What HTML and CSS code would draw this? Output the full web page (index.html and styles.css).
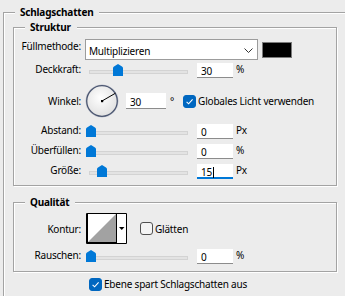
FILE: index.html
```html
<!DOCTYPE html>
<html lang="de">
<head>
    <meta charset="UTF-8">
    <meta name="viewport" content="width=device-width, initial-scale=1.0">
    <title>Schlagschatten</title>
    <link rel="stylesheet" href="styles.css">
</head>
<body>
    <fieldset class="group outer">
        <legend>Schlagschatten</legend>

        <fieldset class="group inner structure">
            <legend>Struktur</legend>

            <div class="row blend-row">
                <span class="label">Füllmethode:</span>
                <div class="select">
                    <span>Multiplizieren</span>
                    <svg class="chevron" width="9" height="5" viewBox="0 0 9 5"><path d="M0.5 0.5 4.5 4.5 8.5 0.5" fill="none" stroke="#333" stroke-width="1"/></svg>
                </div>
                <div class="swatch"></div>
            </div>

            <div class="row slider-row opacity-row">
                <span class="label">Deckkraft:</span>
                <div class="slider">
                    <div class="track"></div>
                    <svg class="thumb" style="left:28px" width="10" height="12" viewBox="0 0 10 12"><path d="M0 4Q0 3 1 2.4L5 0 9 2.4Q10 3 10 4V12H0Z" fill="#0078d7"/></svg>
                </div>
                <div class="field">30</div>
                <span class="unit">%</span>
            </div>

            <div class="row angle-row">
                <span class="label">Winkel:</span>
                <svg class="dial" width="34" height="34" viewBox="0 0 34 34">
                    <defs>
                        <radialGradient id="dialFill" cx="45%" cy="40%" r="60%">
                            <stop offset="0" stop-color="#ffffff"/>
                            <stop offset="1" stop-color="#e1e1e1"/>
                        </radialGradient>
                    </defs>
                    <circle cx="17" cy="17" r="16.2" fill="none" stroke="#c8cbd4" stroke-width="1"/>
                    <circle cx="17" cy="17" r="15.3" fill="url(#dialFill)" stroke="#4a5570" stroke-width="1.3"/>
                    <line x1="17" y1="17" x2="30.5" y2="9.2" stroke="#000" stroke-width="1"/>
                    <rect x="16" y="16" width="2.2" height="2.2" fill="#000"/>
                </svg>
                <div class="field wide">30</div>
                <span class="degree">°</span>
                <label class="check">
                    <span class="check-box on">
                        <svg width="11" height="11" viewBox="0 0 11 11"><path d="M2.6 5.8 4.6 7.8 8.6 3.4" fill="none" stroke="#fff" stroke-width="1.1"/></svg>
                    </span>
                    Globales Licht verwenden
                </label>
            </div>

            <div class="row slider-row distance-row">
                <span class="label">Abstand:</span>
                <div class="slider">
                    <div class="track"></div>
                    <svg class="thumb" style="left:1px" width="10" height="12" viewBox="0 0 10 12"><path d="M0 4Q0 3 1 2.4L5 0 9 2.4Q10 3 10 4V12H0Z" fill="#0078d7"/></svg>
                </div>
                <div class="field">0</div>
                <span class="unit">Px</span>
            </div>

            <div class="row slider-row">
                <span class="label">Überfüllen:</span>
                <div class="slider">
                    <div class="track"></div>
                    <svg class="thumb" style="left:1px" width="10" height="12" viewBox="0 0 10 12"><path d="M0 4Q0 3 1 2.4L5 0 9 2.4Q10 3 10 4V12H0Z" fill="#0078d7"/></svg>
                </div>
                <div class="field">0</div>
                <span class="unit">%</span>
            </div>

            <div class="row slider-row">
                <span class="label">Größe:</span>
                <div class="slider">
                    <div class="track"></div>
                    <svg class="thumb" style="left:12px" width="10" height="12" viewBox="0 0 10 12"><path d="M0 4Q0 3 1 2.4L5 0 9 2.4Q10 3 10 4V12H0Z" fill="#0078d7"/></svg>
                </div>
                <div class="field active">15<span class="caret"></span></div>
                <span class="unit">Px</span>
            </div>
        </fieldset>

        <fieldset class="group inner quality">
            <legend>Qualität</legend>

            <div class="row contour-row">
                <span class="label">Kontur:</span>
                <svg class="contour" width="41" height="31" viewBox="0 0 41 31">
                    <rect x="0" y="0" width="41" height="31" fill="#fff"/>
                    <path d="M2 29 30 1V29Z" fill="#a2a2a2"/>
                    <path d="M0.5 0.5H40.5V30.5H0.5Z" fill="none" stroke="#000"/>
                    <path d="M1.5 1V30M1 29.5H30M30.5 1V30" fill="none" stroke="#000"/>
                    <path d="M33 14H38.5L35.75 17Z" fill="#000"/>
                </svg>
                <label class="check">
                    <span class="check-box"></span>
                    Glätten
                </label>
            </div>

            <div class="row slider-row">
                <span class="label">Rauschen:</span>
                <div class="slider">
                    <div class="track"></div>
                    <svg class="thumb" style="left:1px" width="10" height="12" viewBox="0 0 10 12"><path d="M0 4Q0 3 1 2.4L5 0 9 2.4Q10 3 10 4V12H0Z" fill="#0078d7"/></svg>
                </div>
                <div class="field">0</div>
                <span class="unit">%</span>
            </div>
        </fieldset>

        <div class="row layer-row">
            <label class="check">
                <span class="check-box on">
                    <svg width="11" height="11" viewBox="0 0 11 11"><path d="M2.6 5.8 4.6 7.8 8.6 3.4" fill="none" stroke="#fff" stroke-width="1.1"/></svg>
                </span>
                Ebene spart Schlagschatten aus
            </label>
        </div>
    </fieldset>
</body>
</html>
```

FILE: styles.css
```css
body {
    margin: 0;
    background: #ececec;
    font-family: "Noto Sans", sans-serif;
    font-size: 10px;
    line-height: 14px;
    letter-spacing: -0.2px;
    color: #000;
    overflow: hidden;
}
.group {
    margin: 0;
    padding: 0;
    min-width: 0;
    box-sizing: border-box;
    border: 1px solid #a3a3a3;
    box-shadow: inset 1px 1px 0 #fff, 1px 1px 0 #fff;
}
.group > legend {
    margin-left: 11px;
    padding: 0 6px 0 5px;
    font-weight: bold;
    line-height: 14px;
    background: #ececec;
}
/* the dialog continues past the right and bottom edge */
.outer {
    margin: 5px 0 0 3px;
    width: 342px;
    padding-bottom: 5px;
    border-right: 0;
    border-bottom: 0;
    box-shadow: inset 1px 1px 0 #fff;
}
.inner {
    margin-left: 9px;
    width: 324px;
}
.structure {
    margin-top: 1px;
    padding-bottom: 6px;
}
.quality {
    margin-top: 9px;
    padding-bottom: 7px;
}
.row {
    display: flex;
    align-items: center;
}
.label {
    flex: none;
    width: 67px;
    margin-right: 4px;
    text-align: right;
}
.blend-row {
    height: 21px;
    margin-top: 5px;
    align-items: flex-start;
}
.select {
    flex: none;
    display: flex;
    justify-content: space-between;
    align-items: flex-start;
    width: 173px;
    height: 21px;
    box-sizing: border-box;
    padding: 4px 4px 0 3px;
    margin-right: 4px;
    background: #fff;
    border: 1px solid #9c9c9c;
}
.chevron {
    margin-top: 4px;
}
.swatch {
    align-self: center;
    width: 30px;
    height: 16px;
    box-sizing: border-box;
    background: #000;
    border: 1px solid #7b7b7b;
}
.slider-row {
    height: 15px;
    margin-top: 5px;
    align-items: flex-start;
}
.slider-row .label,
.unit {
    margin-top: -1px;
}
.opacity-row {
    margin-top: 3px;
}
.distance-row {
    margin-top: 6px;
}
.slider {
    position: relative;
    flex: none;
    width: 108px;
    height: 15px;
    margin-right: 4px;
}
.track {
    height: 4px;
    margin: 7px 5px 0 4px;
    box-sizing: border-box;
    background: #e3e3e3;
    border: 1px solid #d3d3d3;
}
.thumb {
    position: absolute;
    top: 1px;
}
.field {
    flex: none;
    width: 36px;
    height: 15px;
    box-sizing: border-box;
    padding: 1px 0 0 4px;
    background: #fff;
    border-bottom: 1px solid #8c8c8c;
}
.field.active {
    border-bottom: 2px solid #0078d7;
}
.caret {
    display: inline-block;
    width: 1px;
    height: 11px;
    margin-left: 1px;
    vertical-align: -2px;
    background: #000;
}
.unit {
    margin-left: 3px;
}
.angle-row {
    height: 34px;
    margin-top: 6px;
}
.dial {
    flex: none;
}
.field.wide {
    width: 40px;
    height: 16px;
    margin-left: 7px;
    padding-top: 2px;
}
.degree {
    margin-left: 4px;
}
.check {
    display: flex;
    align-items: center;
    gap: 2px;
}
.check-box {
    display: flex;
    align-items: center;
    justify-content: center;
    width: 13px;
    height: 13px;
    box-sizing: border-box;
    border-radius: 3px;
    border: 1px solid #505050;
    background: #f4f4f4;
}
.check-box.on {
    border-color: #0067c0;
    background: #0067c0;
}
.angle-row .check {
    margin-left: 9px;
}
.contour-row {
    height: 31px;
    margin-top: 4px;
}
.contour {
    flex: none;
    margin-left: 1px;
}
.contour-row .check {
    margin-left: 13px;
}
.layer-row {
    height: 14px;
    margin: 5px 0 0 85px;
}
```
